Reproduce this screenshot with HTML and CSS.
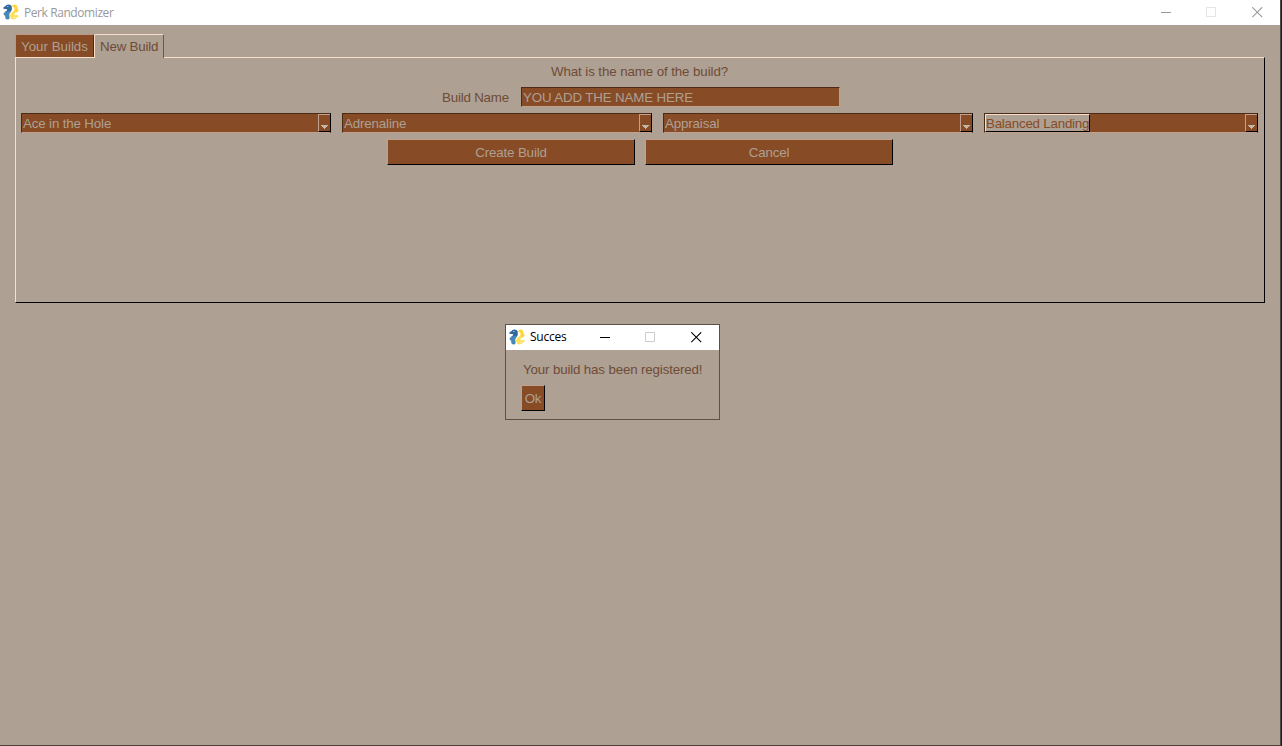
FILE: index.html
```html
<!DOCTYPE html>
<html lang="en">
<head>
<meta charset="utf-8">
<title>Perk Randomizer</title>
<link rel="stylesheet" href="styles.css">
</head>
<body>
<svg class="defs" aria-hidden="true">
  <symbol id="logo" viewBox="0 0 16 16">
    <path fill="#31699d" d="M.4 4.8V3.4Q1 2.4 2.4 2.2Q3 .6 5.2.5Q8.6.4 8.8 3.2V5.4Q8.7 7.5 6.8 8.3L4 9.4H2.2V7.8Q4.5 6.4 4.2 5.2Z"/>
    <path fill="#4788bb" d="M.4 9.8Q1 8.4 3 7.6L6.8 6.8L8 7.8Q6.6 9 6.3 10.2L6.6 14.2Q6 15.5 4.3 15.4Q2.4 15.2 2.2 13.4V11.8Q.7 11.3.4 9.8Z"/>
    <path fill="#ffd43b" d="M9.4 3V1.6Q10.2.5 12 .6Q14.2.8 14.3 2.8V4.2Q15.6 4.8 15.6 6.4Q15.3 7.8 13 8.4Q10.6 9.1 9.9 10.6H8.4Q8.5 8.7 9.8 7.8Q11.6 6.8 11.6 5.2L11.3 3.4Z"/>
    <path fill="#ffe15c" d="M15.6 11.2V12.4Q15 13.4 13.7 13.5Q13 15.4 10.8 15.5Q7.5 15.3 7.2 12.8V10.4Q7.6 8.4 9.9 7.8L13.4 7.2V8.6Q11.2 9.3 11.3 11.1Z"/>
    <circle cx="4.9" cy="2.4" r=".5" fill="#fff"/><circle cx="11.7" cy="13.6" r=".5" fill="#fff"/>
  </symbol>
</svg>
<div class="window">
  <header class="titlebar">
    <svg class="logo"><use href="#logo"/></svg>
    <span class="title main-title">Perk Randomizer</span>
    <div class="controls">
      <svg class="ctl min" viewBox="0 0 11 11"><path d="M0 5.5H10"/></svg>
      <svg class="ctl faint" viewBox="0 0 11 11"><path d="M.5.5H9.5V9.5H.5Z"/></svg>
      <svg class="ctl cross" viewBox="0 0 11 11"><path d="M.3.3L10.2 10.2M10.2.3L.3 10.2"/></svg>
    </div>
  </header>
  <main class="content">
    <nav class="tabs">
      <div class="tab">Your Builds</div>
      <div class="tab active">New Build</div>
    </nav>
    <section class="panel">
      <p class="question">What is the name of the build?</p>
      <div class="name-row">
        <label class="name-label">Build Name</label>
        <div class="field name-field"><span>YOU ADD THE NAME HERE</span></div>
      </div>
      <div class="combos">
        <div class="field combo"><span>Ace in the Hole</span><i class="drop"><svg viewBox="0 0 7 4"><path d="M0 0H7V1H6V2H5V3H4V4H3V3H2V2H1V1H0Z"/></svg></i></div>
        <div class="field combo"><span>Adrenaline</span><i class="drop"><svg viewBox="0 0 7 4"><path d="M0 0H7V1H6V2H5V3H4V4H3V3H2V2H1V1H0Z"/></svg></i></div>
        <div class="field combo"><span>Appraisal</span><i class="drop"><svg viewBox="0 0 7 4"><path d="M0 0H7V1H6V2H5V3H4V4H3V3H2V2H1V1H0Z"/></svg></i></div>
        <div class="field combo last"><span class="selected">Balanced Landing</span><i class="drop"><svg viewBox="0 0 7 4"><path d="M0 0H7V1H6V2H5V3H4V4H3V3H2V2H1V1H0Z"/></svg></i></div>
      </div>
      <div class="actions">
        <div class="button">Create Build</div>
        <div class="button">Cancel</div>
      </div>
    </section>
  </main>
</div>
<div class="dialog">
  <header class="titlebar dialog-bar">
    <svg class="logo"><use href="#logo"/></svg>
    <span class="title">Succes</span>
    <div class="controls">
      <svg class="ctl min" viewBox="0 0 11 11"><path d="M0 5.5H10"/></svg>
      <svg class="ctl faint" viewBox="0 0 11 11"><path d="M.5.5H9.5V9.5H.5Z"/></svg>
      <svg class="ctl cross" viewBox="0 0 11 11"><path d="M.3.3L10.2 10.2M10.2.3L.3 10.2"/></svg>
    </div>
  </header>
  <p class="message">Your build has been registered!</p>
  <div class="button ok">Ok</div>
</div>
</body>
</html>
```
FILE: styles.css
```css
* { box-sizing: border-box; }
body {
  margin: 0;
  width: 1282px;
  height: 746px;
  overflow: hidden;
  background: #1d1d1d;
  font: 13.33px/16px "Liberation Sans", Arial, sans-serif;
  letter-spacing: -0.15px;
  color: #6f4c36;
  white-space: nowrap;
}
p { margin: 0; }
svg { display: block; }
.defs { position: absolute; width: 0; height: 0; }
.window {
  width: 1281px;
  height: 746px;
  background: #aea093;
  border-right: 1px solid #4b4744;
  border-bottom: 1px solid #4b4038;
}
.titlebar {
  display: flex;
  align-items: center;
  height: 25px;
  padding-left: 3px;
  background: #fff;
  color: #999;
  font: 12px/16px "Open Sans", "Noto Sans", sans-serif;
}
.logo { width: 16px; height: 16px; margin: -1px 5px 0 0; }
.title { letter-spacing: -0.25px; }
.main-title { letter-spacing: -0.42px; }
.controls { display: flex; gap: 35px; margin-left: auto; padding-right: 17px; }
.ctl { width: 11px; height: 11px; fill: none; stroke: currentColor; }
.ctl.min { margin-right: -1px; }
.ctl.faint { stroke: #e5e5e5; }
.ctl.cross { stroke-width: 1.1; }
.content { padding: 9px 15px 0; }
.tabs { display: flex; align-items: flex-end; height: 23px; }
.tab {
  width: 79px;
  height: 23px;
  padding: 4px 0 0 5px;
  background: #874b26;
  color: #aea093;
  letter-spacing: 0;
  border-top: 1px solid #ba9883;
  border-left: 1px solid #ba9883;
  border-right: 1px solid #4b2a16;
  border-radius: 2px 2px 0 0;
}
.tab.active {
  position: relative;
  width: 70px;
  height: 24px;
  margin: 0 0 -1px;
  padding: 4px 0 0 5px;
  background: #aea093;
  color: #6f4c36;
  letter-spacing: -0.2px;
  border-color: #f8dfcb;
  border-right: 1px solid #6a5a50;
}
.panel {
  width: 1250px;
  height: 246px;
  border: 1px solid #000;
  border-top-color: #f8dfcb;
  border-left-color: #f8dfcb;
  padding: 6px 5px 0;
}
.question { text-align: center; padding-right: 1px; letter-spacing: -0.1px; }
.name-row { display: flex; align-items: center; gap: 12px; height: 20px; margin: 7px 0 0 421px; }
.field {
  display: flex;
  align-items: center;
  height: 20px;
  background: #874b26;
  color: #aea093;
  border: 1px solid #4b2a16;
  border-right-color: #c1a18d;
  border-bottom-color: #c1a18d;
  padding-left: 1px;
}
.field span { padding-top: 1px; }
.name-label { width: 67px; letter-spacing: -0.2px; padding-top: 1px; }
.name-field { width: 319px; }
.combos { display: flex; gap: 11px; margin-top: 6px; }
.combo { width: 310px; justify-content: space-between; border-right-color: #000; }
.combo.last { width: 274px; }
.drop {
  width: 12px;
  height: 18px;
  border: 1px solid #c1a18d;
  border-right: 0;
  border-bottom-color: #000;
  padding: 10px 0 0 2px;
}
.drop svg { width: 7px; height: 4px; fill: #c5b5a5; }
.field .selected {
  width: 105px;
  height: 18px;
  margin-left: -1px;
  padding: 1px 0 0;
  border: 1px solid #f8dfcb;
  border-right-color: #000;
  border-bottom-color: #000;
  background: #aea093;
  color: #874b26;
  letter-spacing: -0.22px;
}
.actions { display: flex; justify-content: center; gap: 10px; margin-top: 6px; }
.button {
  width: 248px;
  height: 26px;
  padding-top: 5px;
  text-align: center;
  background: #874b26;
  color: #aea093;
  border: 1px solid #c1a18d;
  border-right-color: #000;
  border-bottom-color: #000;
}
.dialog {
  position: absolute;
  left: 505px;
  top: 324px;
  width: 215px;
  height: 96px;
  background: #aea093;
  border: 1px solid #5b5149;
}
.dialog-bar { color: #000; }
.dialog-bar .title { margin-top: -1px; }
.dialog .ctl.faint { stroke: #ccc; }
.message { margin: 12px 0 0 17px; }
.ok { width: 24px; margin: 7px 0 0 15px; }
```
